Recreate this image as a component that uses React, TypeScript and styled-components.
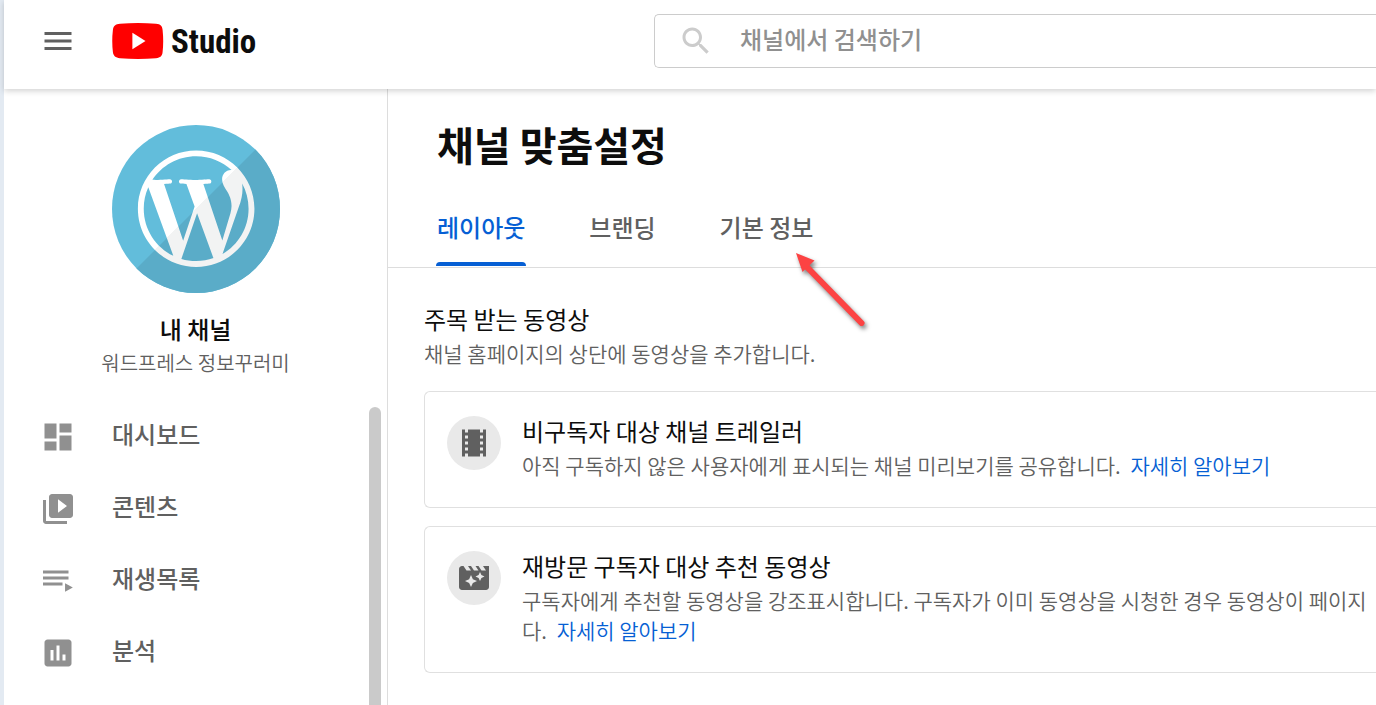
import React from "react";
import styled, { createGlobalStyle } from "styled-components";

const GlobalStyle = createGlobalStyle`
  * { box-sizing: border-box; }
  body {
    margin: 0;
    overflow: hidden;
    background: #fff;
    color: #0d0d0d;
    font-family: "Noto Sans CJK KR", sans-serif;
  }
  h1, h2, h3, p, ul { margin: 0; padding: 0; }
`;

const Page = styled.div`
  display: flex;
  flex-direction: column;
  height: 100vh;
  border-left: 4px solid #e3eaf2;
`;

const Header = styled.header`
  position: relative;
  z-index: 1;
  flex: none;
  display: flex;
  align-items: center;
  height: 89px;
  padding: 0 0 7px 36px;
  box-shadow: 0 2px 6px rgba(0, 0, 0, 0.18);
  background: #fff;
`;

const IconButton = styled.button`
  display: flex;
  padding: 0;
  border: 0;
  background: none;
  color: #606060;
  cursor: pointer;
`;

const Logo = styled.a`
  display: flex;
  align-items: center;
  gap: 7px;
  width: 542px;
  margin-left: 36px;
  color: #0d0d0d;
  text-decoration: none;
`;

const LogoText = styled.span`
  padding-top: 2px;
  font: bold 33px/48px "Roboto Condensed", "Liberation Sans Narrow", sans-serif;
`;

const Search = styled.form`
  flex: 1;
  display: flex;
  align-items: center;
  gap: 26px;
  height: 54px;
  padding-left: 23px;
  border: 1px solid #ccc;
  border-right: 0;
  border-radius: 5px 0 0 5px;
  color: #ccc;
`;

const SearchInput = styled.input`
  flex: 1;
  min-width: 0;
  height: 42px;
  padding: 0 0 6px;
  border: 0;
  outline: 0;
  background: none;
  color: #0d0d0d;
  font: 500 24px/36px "Noto Sans CJK KR", sans-serif;
  &::placeholder { color: #909090; opacity: 1; }
`;

const Body = styled.div`
  flex: 1;
  display: flex;
  min-height: 0;
`;

const Sidebar = styled.aside`
  flex: none;
  display: flex;
  flex-direction: column;
  width: 384px;
  padding-top: 36px;
  border-right: 1px solid #ddd;
`;

const Channel = styled.div`
  display: flex;
  flex-direction: column;
  align-items: center;
  height: 282px;
`;

const ChannelTitle = styled.p`
  margin-top: 18px;
  font-size: 24px;
  font-weight: 500;
  line-height: 36px;
`;

const ChannelName = styled.p`
  font-size: 20px;
  font-weight: 350;
  line-height: 32px;
  color: #606060;
`;

const NavArea = styled.div`
  flex: 1;
  display: flex;
  justify-content: space-between;
  min-height: 0;
  padding-right: 6px;
  overflow: hidden;
`;

const NavList = styled.ul`
  flex: 1;
  margin-top: -6px;
  list-style: none;
`;

const NavLink = styled.a`
  display: flex;
  align-items: center;
  gap: 36px;
  height: 72px;
  padding-left: 36px;
  color: #909090;
  text-decoration: none;
`;

const NavLabel = styled.span`
  padding-bottom: 6px;
  font-size: 24px;
  font-weight: 500;
  line-height: 36px;
  color: #606060;
`;

const ScrollThumb = styled.div`
  width: 12px;
  border-radius: 6px 6px 0 0;
  background: #cacaca;
`;

const Main = styled.main`
  position: relative;
  flex: 1;
  min-width: 0;
  overflow: hidden;
`;

const PageTitle = styled.h1`
  padding: 25px 49px 0;
  font-size: 40px;
  font-weight: 600;
  line-height: 60px;
`;

const Tabs = styled.div`
  display: flex;
  gap: 62px;
  margin-top: 28px;
  padding: 0 48px 1px;
  border-bottom: 1px solid #ddd;
`;

const Tab = styled.button<{ $active: boolean }>`
  display: flex;
  flex-direction: column;
  justify-content: space-between;
  height: 64px;
  padding: 0;
  border: 0;
  background: none;
  color: ${(p) => (p.$active ? "#065fd4" : "#606060")};
  font: 500 24px/36px "Noto Sans CJK KR", sans-serif;
  cursor: pointer;
`;

const TabText = styled.span`
  padding: 7px 1px 0;
`;

const TabMark = styled.span`
  align-self: stretch;
  height: 4px;
  border-radius: 4px 4px 0 0;
  background: #065fd4;
`;

const Section = styled.section`
  padding: 36px 0 0 36px;
`;

const Heading = styled.h2`
  padding-bottom: 4px;
  font-size: 24px;
  font-weight: 400;
  line-height: 30px;
`;

const Note = styled.p`
  font-size: 21px;
  font-weight: 350;
  line-height: 30px;
  color: #606060;
  white-space: nowrap;
`;

const Cards = styled.div`
  display: flex;
  flex-direction: column;
  gap: 18px;
  margin-top: 23px;
`;

const Card = styled.article`
  display: flex;
  gap: 21px;
  padding: 24px 0 27px 22px;
  border: 1px solid #e0e0e0;
  border-right: 0;
  border-radius: 6px 0 0 6px;
`;

const CardIcon = styled.div`
  flex: none;
  display: flex;
  align-items: center;
  justify-content: center;
  width: 54px;
  height: 54px;
  border-radius: 50%;
  background: #e9e9e9;
  color: #606060;
`;

const MoreLink = styled.a`
  margin-left: 5px;
  color: #065fd4;
  text-decoration: none;
`;

const Pointer = styled.svg`
  position: absolute;
  top: 156px;
  left: 400px;
  pointer-events: none;
  filter: drop-shadow(2px 3px 2px rgba(0, 0, 0, 0.5));
`;

const Icon = ({ d }: { d: string }) => (
  <svg width="36" height="36" viewBox="0 0 24 24" fill="currentColor" aria-hidden="true">
    <path d={d} />
  </svg>
);

const icons = {
  menu: "M3 18h18v-2H3v2zm0-5h18v-2H3v2zm0-7v2h18V6H3z",
  search:
    "M15.5 14h-.79l-.28-.27C15.41 12.59 16 11.11 16 9.5 16 5.91 13.09 3 9.5 3S3 5.91 3 9.5 5.91 16 9.5 16c1.61 0 3.09-.59 4.23-1.57l.27.28v.79l5 4.99L20.49 19l-4.99-5zm-6 0C7.01 14 5 11.99 5 9.5S7.01 5 9.5 5 14 7.01 14 9.5 11.99 14 9.5 14z",
  dashboard: "M3 13h8V3H3v10zm0 8h8v-6H3v6zm10 0h8V11h-8v10zm0-18v6h8V3h-8z",
  content:
    "M4 6H2v14c0 1.1.9 2 2 2h14v-2H4V6zm16-4H8c-1.1 0-2 .9-2 2v12c0 1.1.9 2 2 2h12c1.1 0 2-.9 2-2V4c0-1.1-.9-2-2-2zm-8 12.5v-9l6 4.5-6 4.5z",
  playlist: "M2 5h17v2H2zM2 9h17v2H2zM2 13h13v2H2zM16.7 13.5v5.6l5.2-2.8z",
  analytics:
    "M19 3H5c-1.1 0-2 .9-2 2v14c0 1.1.9 2 2 2h14c1.1 0 2-.9 2-2V5c0-1.1-.9-2-2-2zM9 17H7v-7h2v7zm4 0h-2V7h2v10zm4 0h-2v-4h2v4z",
  film: "M18 3v2h-2V3H8v2H6V3H4v18h2v-2h2v2h8v-2h2v2h2V3h-2zM8 17H6v-2h2v2zm0-4H6v-2h2v2zm0-4H6V7h2v2zm10 8h-2v-2h2v2zm0-4h-2v-2h2v2zm0-4h-2V7h2v2z",
  clapper:
    "M18 4l2 3h-3l-2-3h-2l2 3h-3l-2-3H8l2 3H7L5 4H4c-1.1 0-1.99.9-1.99 2L2 18c0 1.1.9 2 2 2h16c1.1 0 2-.9 2-2V4h-4zm-6.75 11.25L10 18l-1.25-2.75L6 14l2.75-1.25L10 10l1.25 2.75L14 14l-2.75 1.25zm5.69-3.31L16 14l-.94-2.06L13 11l2.06-.94L16 8l.94 2.06L19 11l-2.06.94z",
};

const wordpress =
  "M256 8C119.3 8 8 119.2 8 256c0 136.7 111.3 248 248 248s248-111.3 248-248C504 119.2 392.7 8 256 8zM33 256c0-32.3 6.9-63 19.3-90.7l106.4 291.4C84.3 420.5 33 344.2 33 256zm223 223c-21.9 0-43-3.2-63-9.1l66.9-194.4 68.5 187.8c.5 1.1 1 2.1 1.6 3.1-23.1 8.1-48 12.6-74 12.6zm30.7-327.5c13.4-.7 25.5-2.1 25.5-2.1 12-1.4 10.6-19.1-1.4-18.4 0 0-36.1 2.8-59.4 2.8-21.9 0-58.7-2.8-58.7-2.8-12-.7-13.4 17.7-1.4 18.4 0 0 11.4 1.4 23.4 2.1l34.7 95.2L200.6 393l-81.2-241.5c13.4-.7 25.5-2.1 25.5-2.1 12-1.4 10.6-19.1-1.4-18.4 0 0-36.1 2.8-59.4 2.8-4.2 0-9.1-.1-14.4-.3C109.6 73 178.1 33 256 33c58 0 110.9 22.2 150.6 58.5-1-.1-1.9-.2-2.9-.2-21.9 0-37.4 19.1-37.4 39.6 0 18.4 10.6 33.9 21.9 52.3 8.5 14.8 18.4 33.9 18.4 61.5 0 19.1-7.3 41.2-17 72.1l-22.2 74.3-80.7-239.6zm81.4 297.2l68.1-196.9c12.7-31.8 17-57.2 17-79.9 0-8.2-.5-15.8-1.5-22.9 17.4 31.8 27.3 68.2 27.3 107 0 82.3-44.6 154.1-110.9 192.7z";

const Avatar = () => (
  <svg width="168" height="168" viewBox="0 0 168 168" role="img" aria-label="WordPress">
    <defs>
      <clipPath id="avatar-disc">
        <circle cx="84" cy="84" r="84" />
      </clipPath>
      <linearGradient id="avatar-mark" x1="0" y1="0" x2="1" y2="1">
        <stop offset="0.5" stopColor="#fff" />
        <stop offset="0.5" stopColor="#f2f3f3" />
      </linearGradient>
    </defs>
    <g clipPath="url(#avatar-disc)">
      <rect width="168" height="168" fill="#62bddb" />
      <path d="M168 0v168H0z" fill="#5aacc8" />
      <g transform="translate(24 23.5) scale(0.235)">
        <path d={wordpress} fill="url(#avatar-mark)" />
      </g>
    </g>
  </svg>
);

const navItems = [
  { label: "대시보드", icon: icons.dashboard },
  { label: "콘텐츠", icon: icons.content },
  { label: "재생목록", icon: icons.playlist },
  { label: "분석", icon: icons.analytics },
];

const tabs = ["레이아웃", "브랜딩", "기본 정보"];

export default function App() {
  return (
    <Page>
      <GlobalStyle />
      <Header>
        <IconButton type="button" aria-label="메뉴">
          <Icon d={icons.menu} />
        </IconButton>
        <Logo href="#">
          <svg width="52" height="36" viewBox="0 0 52 36" aria-hidden="true">
            <path
              d="M8 .8Q26-.8 44 .8C48.5 1.2 50.2 3 50.6 7Q51.8 18 50.6 29C50.2 33 48.5 34.8 44 35.2Q26 36.8 8 35.2C3.5 34.8 1.4 33 .9 29Q-.4 18 .9 7C1.4 3 3.5 1.2 8 .8z"
              fill="#f00"
            />
            <path d="M20.4 9.8v16.4L33.5 18z" fill="#fff" />
          </svg>
          <LogoText>Studio</LogoText>
        </Logo>
        <Search role="search">
          <Icon d={icons.search} />
          <SearchInput type="text" aria-label="채널에서 검색하기" placeholder="채널에서 검색하기" />
        </Search>
      </Header>
      <Body>
        <Sidebar>
          <Channel>
            <Avatar />
            <ChannelTitle>내 채널</ChannelTitle>
            <ChannelName>워드프레스 정보꾸러미</ChannelName>
          </Channel>
          <NavArea>
            <NavList>
              {navItems.map((item) => (
                <li key={item.label}>
                  <NavLink href="#">
                    <Icon d={item.icon} />
                    <NavLabel>{item.label}</NavLabel>
                  </NavLink>
                </li>
              ))}
            </NavList>
            <ScrollThumb />
          </NavArea>
        </Sidebar>
        <Main>
          <PageTitle>채널 맞춤설정</PageTitle>
          <Tabs role="tablist">
            {tabs.map((label, i) => (
              <Tab key={label} type="button" role="tab" aria-selected={i === 0} $active={i === 0}>
                <TabText>{label}</TabText>
                {i === 0 && <TabMark />}
              </Tab>
            ))}
          </Tabs>
          <Section>
            <Heading>주목 받는 동영상</Heading>
            <Note>채널 홈페이지의 상단에 동영상을 추가합니다.</Note>
            <Cards>
              <Card>
                <CardIcon>
                  <Icon d={icons.film} />
                </CardIcon>
                <div>
                  <Heading as="h3">비구독자 대상 채널 트레일러</Heading>
                  <Note>
                    아직 구독하지 않은 사용자에게 표시되는 채널 미리보기를 공유합니다.{" "}
                    <MoreLink href="#">자세히 알아보기</MoreLink>
                  </Note>
                </div>
              </Card>
              <Card>
                <CardIcon>
                  <Icon d={icons.clapper} />
                </CardIcon>
                <div>
                  <Heading as="h3">재방문 구독자 대상 추천 동영상</Heading>
                  <Note>
                    구독자에게 추천할 동영상을 강조표시합니다. 구독자가 이미 동영상을 시청한 경우 동영상이 페이지
                    <br />
                    다. <MoreLink href="#">자세히 알아보기</MoreLink>
                  </Note>
                </div>
              </Card>
            </Cards>
          </Section>
          <Pointer width="84" height="84" viewBox="0 0 84 84" aria-hidden="true">
            <path d="M17 20L73.5 78" stroke="#fc4343" strokeWidth="6" strokeLinecap="round" />
            <path d="M8 8L26.5 15.5 14.5 27z" fill="#fc4343" />
          </Pointer>
        </Main>
      </Body>
    </Page>
  );
}
